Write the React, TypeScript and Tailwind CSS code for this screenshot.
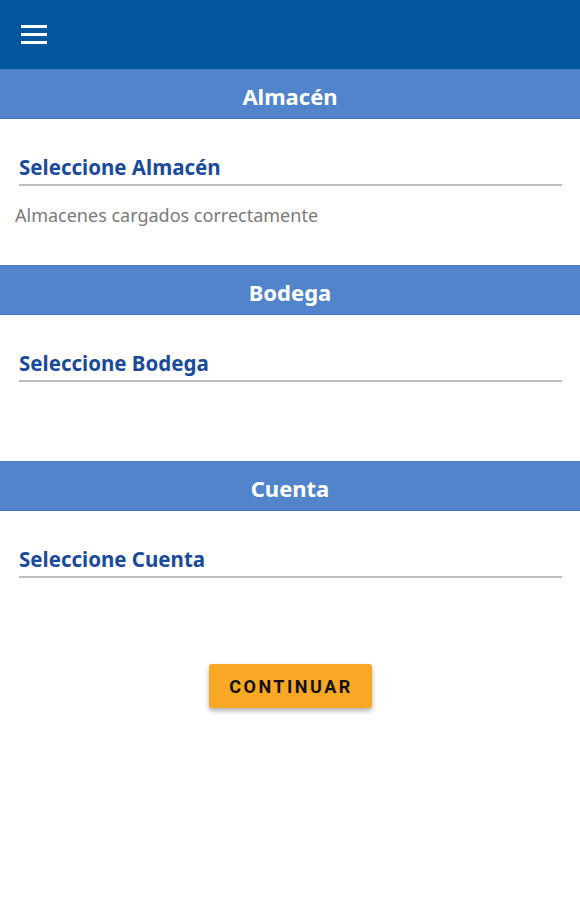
import React from "react";

const sections = [
  { title: "Almacén", label: "Seleccione Almacén", status: "Almacenes cargados correctamente" },
  { title: "Bodega", label: "Seleccione Bodega", status: "" },
  { title: "Cuenta", label: "Seleccione Cuenta", status: "" },
];

function SectionBar({ title }: { title: string }) {
  return (
    <div className="flex h-[50px] items-center justify-center border-t border-b border-t-[#4a7dc6] border-b-[#3f74c0] bg-[#5184cb] pt-[4px]">
      <span className="text-[22px] leading-[28px] font-bold text-white">{title}</span>
    </div>
  );
}

function Section({ title, label, status, last }: { title: string; label: string; status: string; last?: boolean }) {
  return (
    <section>
      <SectionBar title={title} />
      <div className={last ? "h-[153px]" : "h-[146px]"}>
        <div className="ml-[19px] mr-[18px] border-b-2 border-[#bdbdbd] pt-[34px] pb-[3px]">
          <div className="text-[20.5px] leading-[28px] font-bold text-[#1a4b9b]">{label}</div>
        </div>
        {status ? (
          <p className="ml-[15px] mt-[17px] text-[18px] leading-[24px] text-[#7a7a7a]">{status}</p>
        ) : null}
      </div>
    </section>
  );
}

export default function App() {
  return (
    <div className="min-h-[900px] w-full bg-white" style={{ fontFamily: '"Noto Sans", "Open Sans", sans-serif' }}>
      <header className="flex h-[69px] items-center bg-[#02569e] pl-[21px]">
        <button type="button" className="flex w-[26px] flex-col gap-[5px]">
          <span className="block h-[3px] w-full bg-white" />
          <span className="block h-[3px] w-full bg-white" />
          <span className="block h-[3px] w-full bg-white" />
        </button>
      </header>

      {sections.map((s, i) => (
        <Section key={s.title} {...s} last={i === sections.length - 1} />
      ))}

      <div className="flex justify-center">
        <button
          type="button"
          className="h-[44px] w-[163px] rounded-[3px] bg-[#f9a825] pl-[2px] text-[18px] font-bold tracking-[2.5px] text-[#111111] shadow-[0_3px_5px_rgba(0,0,0,0.3)]"
          style={{ fontFamily: "Roboto, sans-serif" }}
        >
          CONTINUAR
        </button>
      </div>
    </div>
  );
}
